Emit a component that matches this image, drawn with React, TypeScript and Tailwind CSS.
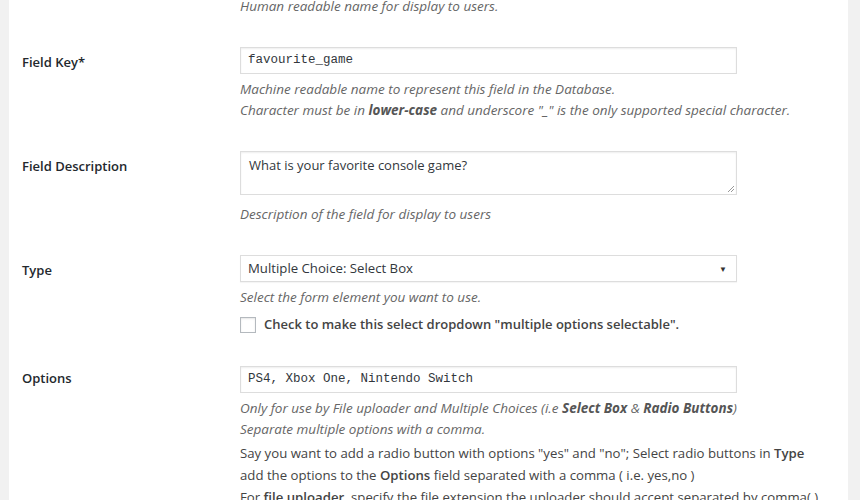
import React from 'react';

const font = { fontFamily: '"Open Sans", "Noto Sans", sans-serif' };

const Row: React.FC<{ label: string; labelPad?: string; children: React.ReactNode }> = ({ label, labelPad = 'pt-[20px]', children }) => (
  <div className="flex">
    <div className={`w-[218px] shrink-0 ${labelPad} text-[13px] leading-[20px] font-semibold text-[#23282d]`}>{label}</div>
    <div className="flex-1 py-[15px]">{children}</div>
  </div>
);

const Desc: React.FC<{ className?: string; children: React.ReactNode }> = ({ className = '', children }) => (
  <p className={`text-[13.5px] leading-[21px] italic text-[#666] ${className}`}>{children}</p>
);

export default function App() {
  return (
    <div className="flex h-[500px] overflow-hidden bg-[#f1f1f1] pl-[9px] pr-[12px]" style={font}>
      <div className="flex-1 bg-white pl-[13px]">
        {/* tail of the previous row */}
        <div className="-mt-[5px] pl-[218px] pb-[15px]">
          <p className="text-[13.5px] leading-[22px] italic text-[#666]">Human readable name for display to users.</p>
        </div>

        <Row label="Field Key*">
          <div className="w-[497px] h-[27px] border border-[#ddd] shadow-[inset_0_1px_2px_rgba(0,0,0,0.07)] px-[7px] flex items-center font-['Liberation_Mono',monospace] text-[12.5px] text-[#32373c]">
            favourite_game
          </div>
          <Desc className="mt-[5px]">
            Machine readable name to represent this field in the Database.
            <br />
            Character must be in <b className="font-bold text-[#555]">lower-case</b> and underscore "_" is the only supported special character.
          </Desc>
        </Row>

        <Row label="Field Description">
          <div className="relative w-[497px] h-[44px] border border-[#ddd] shadow-[inset_0_1px_2px_rgba(0,0,0,0.07)] px-[8px] pt-[3px] text-[13px] leading-[20px] text-[#32373c]">
            What is your favorite console game?
            <svg className="absolute right-[1px] bottom-[1px]" width="8" height="8" viewBox="0 0 8 8">
              <path d="M7 1L1 7M7 4L4 7" stroke="#999" strokeWidth="1" fill="none" />
            </svg>
          </div>
          <Desc className="mt-[9px]">Description of the field for display to users</Desc>
        </Row>

        <Row label="Type">
          <div className="w-[497px] h-[27px] border border-[#ddd] shadow-[0_1px_1px_rgba(0,0,0,0.04)] pl-[7px] pr-[9px] flex items-center justify-between text-[13.2px] text-[#32373c]">
            <span>Multiple Choice: Select Box</span>
            <span className="text-[8px] text-[#333]">▼</span>
          </div>
          <Desc className="mt-[5px]">Select the form element you want to use.</Desc>
          <div className="mt-[6px] flex items-center gap-[8px] h-[22px]">
            <span className="w-[16px] h-[16px] border border-[#b4b9be] shadow-[inset_0_1px_2px_rgba(0,0,0,0.1)] bg-white" />
            <span className="text-[13px] font-semibold text-[#444]">Check to make this select dropdown "multiple options selectable".</span>
          </div>
        </Row>

        <Row label="Options" labelPad="pt-[17px]">
          <div className="w-[497px] h-[27px] border border-[#ddd] shadow-[inset_0_1px_2px_rgba(0,0,0,0.07)] px-[7px] flex items-center font-['Liberation_Mono',monospace] text-[12.5px] text-[#32373c]">
            PS4, Xbox One, Nintendo Switch
          </div>
          <Desc className="mt-[5px]">
            Only for use by File uploader and Multiple Choices (i.e <b className="font-bold text-[#555]">Select Box</b> &amp; <b className="font-bold text-[#555]">Radio Buttons</b>)
            <br />
            Separate multiple options with a comma.
          </Desc>
          <div className="mt-[2px] text-[13.2px] leading-[22px] text-[#444]">
            <p>
              Say you want to add a radio button with options "yes" and "no"; Select radio buttons in <b className="font-semibold">Type</b>
              <br />
              add the options to the <b className="font-semibold">Options</b> field separated with a comma ( i.e. yes,no )
            </p>
            <p>
              For <b className="font-semibold">file uploader</b>, specify the file extension the uploader should accept separated by comma( )
            </p>
          </div>
        </Row>
      </div>
    </div>
  );
}
